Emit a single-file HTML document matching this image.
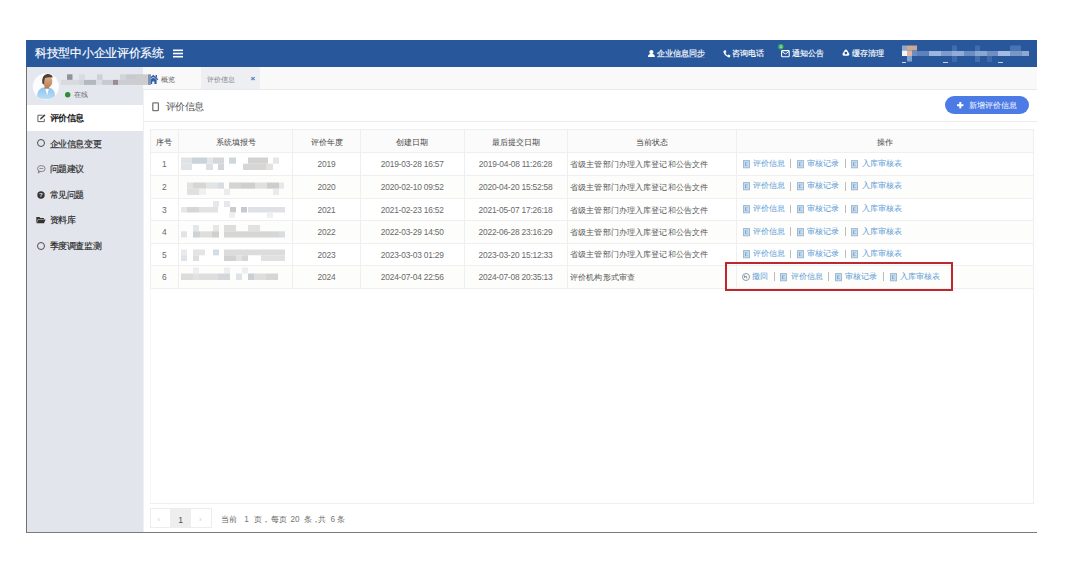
<!DOCTYPE html>
<html><head><meta charset="utf-8">
<style>
*{margin:0;padding:0;box-sizing:border-box}
html,body{width:1080px;height:561px;background:#fff;overflow:hidden;font-family:"Liberation Sans",sans-serif;}
.t{position:absolute;white-space:nowrap;line-height:1}
svg{position:absolute;overflow:visible}
.r{position:absolute}
</style></head><body>
<div class="r" style="left:26px;top:40px;width:1011px;height:27px;background:#28579c"></div>
<div class="r" style="left:26px;top:67px;width:117px;height:466px;background:#e2e5eb"></div>
<div class="r" style="left:26px;top:67px;width:1px;height:466px;background:#707070"></div>
<div class="r" style="left:26px;top:532px;width:1011px;height:1px;background:#7a7a7a"></div>
<div class="t" style="left:35px;top:47px;font-size:12px;color:#fff;letter-spacing:-0.3px;-webkit-text-stroke:0.15px #fff">科技型中小企业评价系统</div>
<svg style="left:173px;top:49px" width="11" height="9"><rect x="0" y="0.5" width="10" height="1.6" fill="#fff"/><rect x="0" y="3.7" width="10" height="1.6" fill="#fff"/><rect x="0" y="6.9" width="10" height="1.6" fill="#fff"/></svg>
<svg style="left:648px;top:49.8px" width="8" height="8"><circle cx="3.4" cy="2.1" r="2.1" fill="#fff"/><path d="M0 7.1 Q0 3.9 2.4 3.9 L4.4 3.9 Q6.8 3.9 6.8 7.1Z" fill="#fff"/></svg>
<div class="t" style="left:657px;top:49.5px;font-size:8px;color:#fff;-webkit-text-stroke:0.15px #fff">企业信息同步</div>
<div class="r" style="left:657px;top:56.5px;width:48px;height:0.8px;background:rgba(255,255,255,0.2)"></div>
<svg style="left:723px;top:49.5px" width="8" height="8"><path d="M1.2 0.5 L2.8 0.3 L3.4 2.3 L2.4 3.1 Q3.2 4.8 4.6 5.5 L5.4 4.6 L7.3 5.3 L7.1 6.9 Q6.4 7.6 5.2 7.3 Q1.6 6 0.4 2.2 Q0.3 1 1.2 0.5Z" fill="#fff"/></svg>
<div class="t" style="left:731.5px;top:49.5px;font-size:8px;color:#fff;-webkit-text-stroke:0.15px #fff">咨询电话</div>
<svg style="left:781px;top:50px" width="9" height="8"><rect x="0.6" y="0.6" width="7.6" height="6.2" rx="0.8" fill="none" stroke="#fff" stroke-width="1.1"/><path d="M0.9 1.5 L4.4 4 L7.9 1.5" fill="none" stroke="#fff" stroke-width="1"/></svg>
<svg style="left:778px;top:44.3px" width="6" height="6"><circle cx="2.8" cy="2.8" r="2.7" fill="#3ab15b"/><text x="2.8" y="4.3" font-size="4" fill="#fff" text-anchor="middle" font-family="Liberation Sans">0</text></svg>
<div class="t" style="left:791.5px;top:49.5px;font-size:8px;color:#fff;-webkit-text-stroke:0.15px #fff">通知公告</div>
<svg style="left:841.5px;top:48.8px" width="8" height="8"><path d="M3.9 1.9 L5.9 5.3 L1.9 5.3Z" fill="none" stroke="#fff" stroke-width="2.9" stroke-linejoin="round"/><circle cx="3.9" cy="4.1" r="1.35" fill="#28579c"/></svg>
<div class="t" style="left:852px;top:49.5px;font-size:8px;color:#fff;-webkit-text-stroke:0.15px #fff">缓存清理</div>
<svg style="left:901px;top:45px" width="135" height="22">
<rect x="1" y="0.5" width="5" height="5" fill="#8fa7cc"/><rect x="6" y="0.5" width="5" height="5" fill="#d0a98e"/><rect x="11" y="0.5" width="5" height="5" fill="#c9a896"/>
<rect x="1" y="5.5" width="5" height="5.5" fill="#f4f4f6"/><rect x="6" y="5.5" width="5" height="5.5" fill="#d9b9a6"/><rect x="11" y="5.5" width="5" height="5.5" fill="#6d8cc0"/>
<rect x="6" y="11" width="5" height="5.5" fill="#7ea0d2"/><rect x="1" y="17" width="4" height="1" fill="#cdd8ea"/>
<rect x="16" y="6" width="12" height="5" fill="#5b82bd"/><rect x="28" y="6" width="12" height="5" fill="#9db6dd"/><rect x="40" y="6" width="11" height="5" fill="#7d9bcc"/><rect x="51" y="6" width="12" height="5" fill="#93acd6"/><rect x="63" y="6" width="11" height="5" fill="#6b8dc4"/><rect x="74" y="6" width="12" height="5" fill="#8aa6d2"/><rect x="86" y="6" width="11" height="5" fill="#6f8fc3"/><rect x="97" y="6" width="12" height="5" fill="#a3bbe0"/><rect x="109" y="6" width="12" height="5" fill="#7896c8"/><rect x="121" y="6" width="7" height="5" fill="#8ea8d3"/>
<rect x="51" y="0.5" width="5" height="5.5" fill="#416cae"/><rect x="74" y="0.5" width="5" height="5.5" fill="#416cae"/><rect x="109" y="0.5" width="11" height="5.5" fill="#4a73b2"/>
<rect x="51" y="11" width="5" height="6" fill="#3f69ab"/><rect x="74" y="11" width="5" height="6" fill="#456eae"/><rect x="86" y="11" width="5" height="6" fill="#3f69ab"/>
<rect x="42" y="17" width="5" height="1" fill="#c5d2e8"/><rect x="97" y="17" width="5" height="1" fill="#c5d2e8"/>
</svg>
<div class="r" style="left:27px;top:67px;width:116px;height:38px;background:#e4e7ed"></div>
<svg style="left:33px;top:72.5px" width="27" height="28">
<defs><clipPath id="cc"><circle cx="12.9" cy="13.6" r="13.1"/></clipPath>
<linearGradient id="face" x1="0" y1="0" x2="0" y2="1"><stop offset="0" stop-color="#e2b48e"/><stop offset="1" stop-color="#b98256"/></linearGradient>
<linearGradient id="shirt" x1="0" y1="0" x2="0" y2="1"><stop offset="0" stop-color="#8ec4ee"/><stop offset="1" stop-color="#b9dcf8"/></linearGradient></defs>
<circle cx="12.9" cy="13.6" r="13.1" fill="#fcfcfe"/>
<g clip-path="url(#cc)">
<path d="M4 24.5 Q3.6 16.8 10 14.6 L16.4 14.6 Q22.6 16.8 22.2 24.5 Q13 27.5 4 24.5Z" fill="url(#shirt)"/>
<path d="M12 14.8 L14.2 22.5 L16 14.8Z" fill="#fbfdff"/>
<rect x="11.6" y="11.5" width="4.4" height="4.2" fill="#b57d55"/>
<ellipse cx="14.6" cy="8.4" rx="4.7" ry="6" fill="url(#face)"/>
<path d="M9.3 10.5 Q8.4 2 14.2 1.1 Q19.2 0.9 19.7 4.6 Q15.8 3.6 12 5 Q11 7.8 11.1 11.2Z" fill="#4d3f35"/>
</g></svg>
<svg style="left:61px;top:73px;z-index:5" width="90" height="13">
<rect x="6" y="1.3" width="5.5" height="5.6" fill="#929397"/><rect x="18" y="1.3" width="6" height="5.6" fill="#d8dbe0"/><rect x="36" y="1.3" width="5.5" height="5.6" fill="#cdd0d5"/><rect x="59" y="1.3" width="6" height="5.6" fill="#d2d4d8"/><rect x="65" y="1.3" width="17" height="5.6" fill="#c8cacf"/>
<rect x="0" y="6.9" width="18" height="5" fill="#d9dadd"/><rect x="18" y="6.9" width="5" height="5" fill="#d0d4db"/><rect x="23" y="6.9" width="12" height="5" fill="#b3b7be"/><rect x="35" y="6.9" width="6" height="5" fill="#d9dce1"/><rect x="41" y="6.9" width="11" height="5" fill="#c6cbd3"/><rect x="52" y="6.9" width="5" height="5" fill="#9a8d92"/><rect x="57" y="6.9" width="25" height="5" fill="#cbcdd2"/><rect x="75" y="1.3" width="12" height="10.6" fill="#cdcdcf"/><rect x="87" y="1.3" width="3" height="10.6" fill="#7f93b5"/>
</svg>
<svg style="left:64.8px;top:91.9px" width="6" height="6"><circle cx="2.7" cy="2.7" r="2.7" fill="#2f8a3a"/></svg>
<div class="t" style="left:74px;top:91px;font-size:7px;color:#666;letter-spacing:-0.5px">在线</div>
<div class="r" style="left:27px;top:105px;width:116px;height:25.6px;background:#fff"></div>
<svg style="left:36.7px;top:113.5px" width="10" height="9"><path d="M5.5 1.2 L0.9 1.2 L0.9 7.6 L7.3 7.6 L7.3 4.8" fill="none" stroke="#444" stroke-width="0.85"/><path d="M3 5.6 L3.2 4.2 L7.3 0.3 L8.5 1.4 L4.4 5.3Z" fill="#444"/></svg>
<div class="t" style="left:49.5px;top:114.0px;font-size:9px;color:#222;letter-spacing:-0.4px;font-weight:bold;">评价信息</div>
<svg style="left:36.7px;top:139.2px" width="10" height="9"><circle cx="4" cy="4" r="3.5" fill="none" stroke="#444" stroke-width="0.95"/></svg>
<div class="t" style="left:49.5px;top:139.7px;font-size:9px;color:#262626;letter-spacing:-0.4px;-webkit-text-stroke:0.15px #262626;">企业信息变更</div>
<svg style="left:36.7px;top:164.8px" width="10" height="9"><ellipse cx="4.3" cy="3.6" rx="3.8" ry="3" fill="none" stroke="#777" stroke-width="0.9"/><path d="M1.8 6 L1.2 8 L3.6 6.4" fill="none" stroke="#777" stroke-width="0.9"/><rect x="2.4" y="3.2" width="3.8" height="0.8" fill="#777"/></svg>
<div class="t" style="left:49.5px;top:165.3px;font-size:9px;color:#262626;letter-spacing:-0.4px;-webkit-text-stroke:0.15px #262626;">问题建议</div>
<svg style="left:36.7px;top:190.6px" width="10" height="9"><circle cx="4" cy="4" r="3.7" fill="#333"/><text x="4" y="6.4" font-size="6.2" font-weight="bold" fill="#e2e5eb" text-anchor="middle" font-family="Liberation Sans">?</text></svg>
<div class="t" style="left:49.5px;top:191.1px;font-size:9px;color:#262626;letter-spacing:-0.4px;-webkit-text-stroke:0.15px #262626;">常见问题</div>
<svg style="left:36.2px;top:215.6px" width="10" height="9"><path d="M0.3 1 L3.5 1 L4.3 2 L8 2 L8 3 L2 3 L0.3 7Z" fill="#333"/><path d="M2.3 3.6 L9.6 3.6 L8 7.3 L0.5 7.3Z" fill="#333"/></svg>
<div class="t" style="left:49.5px;top:216.1px;font-size:9px;color:#262626;letter-spacing:-0.4px;-webkit-text-stroke:0.15px #262626;">资料库</div>
<svg style="left:36.7px;top:241.5px" width="10" height="9"><circle cx="4" cy="4" r="3.5" fill="none" stroke="#444" stroke-width="0.95"/></svg>
<div class="t" style="left:49.5px;top:242.0px;font-size:9px;color:#262626;letter-spacing:-0.4px;-webkit-text-stroke:0.15px #262626;">季度调查监测</div>
<div class="r" style="left:50px;top:147.5px;width:51px;height:0.8px;background:rgba(60,60,60,0.22)"></div>
<div class="r" style="left:143px;top:67px;width:894px;height:23px;background:#f9f9fa;border-bottom:1px solid #e9e9e9"></div>
<div class="r" style="left:201px;top:67px;width:59px;height:22px;background:#edeff2"></div>
<svg style="left:147.5px;top:74px" width="11" height="11"><path d="M0.3 5.2 L5.3 0.8 L10.3 5.2 L9.3 6.2 L5.3 2.8 L1.3 6.2Z" fill="#2d5fa6"/><path d="M2 6 L5.3 3.4 L8.6 6 L8.6 10 L6.4 10 L6.4 7.5 L4.2 7.5 L4.2 10 L2 10Z" fill="#2d5fa6"/><rect x="7.6" y="1" width="1.4" height="2.5" fill="#2d5fa6"/></svg>
<div class="t" style="left:160.5px;top:75.5px;font-size:7px;color:#666;">概览</div>
<div class="t" style="left:207px;top:75.5px;font-size:7px;color:#888;">评价信息</div>
<div class="t" style="left:250.5px;top:74.5px;font-size:8px;color:#3a6fb4;font-weight:bold">×</div>
<div class="r" style="left:143px;top:90px;width:1px;height:442px;background:#eef0f3"></div>
<svg style="left:152px;top:102px" width="8" height="10"><rect x="0.8" y="0.8" width="5.6" height="7.8" rx="0.6" fill="none" stroke="#777" stroke-width="1.3"/></svg>
<div class="t" style="left:165.5px;top:102px;font-size:10px;color:#555;letter-spacing:-0.45px">评价信息</div>
<div class="r" style="left:945px;top:95.5px;width:84px;height:18.5px;border-radius:9.25px;background:#4c7be6"></div>
<svg style="left:957px;top:101.5px" width="7" height="7"><rect x="2.3" y="0" width="2" height="6.4" fill="#fff"/><rect x="0" y="2.2" width="6.4" height="2" fill="#fff"/></svg>
<div class="t" style="left:968.5px;top:101.8px;font-size:8px;color:#fff;">新增评价信息</div>
<div class="r" style="left:144px;top:121px;width:893px;height:1px;background:#ececec"></div>
<div class="r" style="left:149.5px;top:129.3px;width:883.5px;height:22.9px;background:#fbfbfb"></div>
<div class="r" style="left:149.5px;top:175px;width:884px;height:22.69999999999999px;background:#fdfdfb"></div>
<div class="r" style="left:149.5px;top:220.4px;width:884px;height:22.19999999999999px;background:#fdfdfb"></div>
<div class="r" style="left:149.5px;top:265.3px;width:884px;height:22.69999999999999px;background:#fdfdfb"></div>
<div class="r" style="left:149.5px;top:129.3px;width:1px;height:158.7px;background:#efefef"></div>
<div class="r" style="left:178px;top:129.3px;width:1px;height:158.7px;background:#efefef"></div>
<div class="r" style="left:292px;top:129.3px;width:1px;height:158.7px;background:#efefef"></div>
<div class="r" style="left:360px;top:129.3px;width:1px;height:158.7px;background:#efefef"></div>
<div class="r" style="left:463.5px;top:129.3px;width:1px;height:158.7px;background:#efefef"></div>
<div class="r" style="left:566.5px;top:129.3px;width:1px;height:158.7px;background:#efefef"></div>
<div class="r" style="left:736px;top:129.3px;width:1px;height:158.7px;background:#efefef"></div>
<div class="r" style="left:1033px;top:129.3px;width:1px;height:158.7px;background:#efefef"></div>
<div class="r" style="left:149.5px;top:129.3px;width:884.5px;height:1px;background:#efefef"></div>
<div class="r" style="left:149.5px;top:152.2px;width:884.5px;height:1px;background:#efefef"></div>
<div class="r" style="left:149.5px;top:175px;width:884.5px;height:1px;background:#efefef"></div>
<div class="r" style="left:149.5px;top:197.7px;width:884.5px;height:1px;background:#efefef"></div>
<div class="r" style="left:149.5px;top:220.4px;width:884.5px;height:1px;background:#efefef"></div>
<div class="r" style="left:149.5px;top:242.6px;width:884.5px;height:1px;background:#efefef"></div>
<div class="r" style="left:149.5px;top:265.3px;width:884.5px;height:1px;background:#efefef"></div>
<div class="r" style="left:149.5px;top:288px;width:884.5px;height:1px;background:#efefef"></div>
<div class="r" style="left:149.5px;top:288px;width:1px;height:215.5px;background:#f8f8f8"></div>
<div class="r" style="left:1033px;top:288px;width:1px;height:215.5px;background:#efefef"></div>
<div class="r" style="left:149.5px;top:503px;width:884.5px;height:1px;background:#efefef"></div>
<div class="t" style="left:156.25px;top:139.0px;font-size:8px;color:#444;">序号</div>
<div class="t" style="left:215.5px;top:139.0px;font-size:8px;color:#444;">系统填报号</div>
<div class="t" style="left:310.5px;top:139.0px;font-size:8px;color:#444;">评价年度</div>
<div class="t" style="left:396.25px;top:139.0px;font-size:8px;color:#444;">创建日期</div>
<div class="t" style="left:491.5px;top:139.0px;font-size:8px;color:#444;">最后提交日期</div>
<div class="t" style="left:635.75px;top:139.0px;font-size:8px;color:#444;">当前状态</div>
<div class="t" style="left:877.0px;top:139.0px;font-size:8px;color:#444;">操作</div>
<div class="t" style="left:104.25px;width:120px;text-align:center;top:160.4px;font-size:8.4px;letter-spacing:-0.2px;color:#6a6a6a">1</div>
<div class="t" style="left:266.5px;width:120px;text-align:center;top:160.4px;font-size:8.4px;letter-spacing:-0.2px;color:#6a6a6a">2019</div>
<div class="t" style="left:352.25px;width:120px;text-align:center;top:160.4px;font-size:8.4px;letter-spacing:-0.2px;color:#6a6a6a">2019-03-28 16:57</div>
<div class="t" style="left:455.5px;width:120px;text-align:center;top:160.4px;font-size:8.4px;letter-spacing:-0.2px;color:#6a6a6a">2019-04-08 11:26:28</div>
<div class="t" style="left:570px;top:161.1px;font-size:8px;color:#555;letter-spacing:0.13px">省级主管部门办理入库登记和公告文件</div>
<svg style="left:742.8px;top:159.6px" width="8" height="9"><rect x="0.5" y="0.6" width="6" height="7.2" fill="#c2def6" stroke="#9fb7cc" stroke-width="0.95"/><rect x="2" y="2.3" width="1.2" height="3.8" fill="#8fa8c2"/><rect x="3.2" y="2.3" width="1.6" height="0.9" fill="#a3bad0"/><rect x="3.2" y="5.2" width="1.6" height="0.9" fill="#a3bad0"/></svg>
<div class="t" style="left:753px;top:159.6px;font-size:8px;color:#5a9bd5;">评价信息</div>
<div class="r" style="left:789.9px;top:159.29999999999998px;width:1px;height:8.6px;background:#bcbcbc"></div>
<svg style="left:796.5px;top:159.6px" width="8" height="9"><rect x="0.5" y="0.6" width="6" height="7.2" fill="#c2def6" stroke="#9fb7cc" stroke-width="0.95"/><rect x="2" y="2.3" width="1.2" height="3.8" fill="#8fa8c2"/><rect x="3.2" y="2.3" width="1.6" height="0.9" fill="#a3bad0"/><rect x="3.2" y="5.2" width="1.6" height="0.9" fill="#a3bad0"/></svg>
<div class="t" style="left:806.6px;top:159.6px;font-size:8px;color:#5a9bd5;">审核记录</div>
<div class="r" style="left:845px;top:159.29999999999998px;width:1px;height:8.6px;background:#bcbcbc"></div>
<svg style="left:851px;top:159.6px" width="8" height="9"><rect x="0.5" y="0.6" width="6" height="7.2" fill="#c2def6" stroke="#9fb7cc" stroke-width="0.95"/><rect x="2" y="2.3" width="1.2" height="3.8" fill="#8fa8c2"/><rect x="3.2" y="2.3" width="1.6" height="0.9" fill="#a3bad0"/><rect x="3.2" y="5.2" width="1.6" height="0.9" fill="#a3bad0"/></svg>
<div class="t" style="left:861.7px;top:159.6px;font-size:8px;color:#5a9bd5;">入库审核表</div>
<div class="t" style="left:104.25px;width:120px;text-align:center;top:183.15px;font-size:8.4px;letter-spacing:-0.2px;color:#6a6a6a">2</div>
<div class="t" style="left:266.5px;width:120px;text-align:center;top:183.15px;font-size:8.4px;letter-spacing:-0.2px;color:#6a6a6a">2020</div>
<div class="t" style="left:352.25px;width:120px;text-align:center;top:183.15px;font-size:8.4px;letter-spacing:-0.2px;color:#6a6a6a">2020-02-10 09:52</div>
<div class="t" style="left:455.5px;width:120px;text-align:center;top:183.15px;font-size:8.4px;letter-spacing:-0.2px;color:#6a6a6a">2020-04-20 15:52:58</div>
<div class="t" style="left:570px;top:183.85px;font-size:8px;color:#555;letter-spacing:0.13px">省级主管部门办理入库登记和公告文件</div>
<svg style="left:742.8px;top:182.35px" width="8" height="9"><rect x="0.5" y="0.6" width="6" height="7.2" fill="#c2def6" stroke="#9fb7cc" stroke-width="0.95"/><rect x="2" y="2.3" width="1.2" height="3.8" fill="#8fa8c2"/><rect x="3.2" y="2.3" width="1.6" height="0.9" fill="#a3bad0"/><rect x="3.2" y="5.2" width="1.6" height="0.9" fill="#a3bad0"/></svg>
<div class="t" style="left:753px;top:182.35px;font-size:8px;color:#5a9bd5;">评价信息</div>
<div class="r" style="left:789.9px;top:182.04999999999998px;width:1px;height:8.6px;background:#bcbcbc"></div>
<svg style="left:796.5px;top:182.35px" width="8" height="9"><rect x="0.5" y="0.6" width="6" height="7.2" fill="#c2def6" stroke="#9fb7cc" stroke-width="0.95"/><rect x="2" y="2.3" width="1.2" height="3.8" fill="#8fa8c2"/><rect x="3.2" y="2.3" width="1.6" height="0.9" fill="#a3bad0"/><rect x="3.2" y="5.2" width="1.6" height="0.9" fill="#a3bad0"/></svg>
<div class="t" style="left:806.6px;top:182.35px;font-size:8px;color:#5a9bd5;">审核记录</div>
<div class="r" style="left:845px;top:182.04999999999998px;width:1px;height:8.6px;background:#bcbcbc"></div>
<svg style="left:851px;top:182.35px" width="8" height="9"><rect x="0.5" y="0.6" width="6" height="7.2" fill="#c2def6" stroke="#9fb7cc" stroke-width="0.95"/><rect x="2" y="2.3" width="1.2" height="3.8" fill="#8fa8c2"/><rect x="3.2" y="2.3" width="1.6" height="0.9" fill="#a3bad0"/><rect x="3.2" y="5.2" width="1.6" height="0.9" fill="#a3bad0"/></svg>
<div class="t" style="left:861.7px;top:182.35px;font-size:8px;color:#5a9bd5;">入库审核表</div>
<div class="t" style="left:104.25px;width:120px;text-align:center;top:205.8px;font-size:8.4px;letter-spacing:-0.2px;color:#6a6a6a">3</div>
<div class="t" style="left:266.5px;width:120px;text-align:center;top:205.8px;font-size:8.4px;letter-spacing:-0.2px;color:#6a6a6a">2021</div>
<div class="t" style="left:352.25px;width:120px;text-align:center;top:205.8px;font-size:8.4px;letter-spacing:-0.2px;color:#6a6a6a">2021-02-23 16:52</div>
<div class="t" style="left:455.5px;width:120px;text-align:center;top:205.8px;font-size:8.4px;letter-spacing:-0.2px;color:#6a6a6a">2021-05-07 17:26:18</div>
<div class="t" style="left:570px;top:206.5px;font-size:8px;color:#555;letter-spacing:0.13px">省级主管部门办理入库登记和公告文件</div>
<svg style="left:742.8px;top:205.0px" width="8" height="9"><rect x="0.5" y="0.6" width="6" height="7.2" fill="#c2def6" stroke="#9fb7cc" stroke-width="0.95"/><rect x="2" y="2.3" width="1.2" height="3.8" fill="#8fa8c2"/><rect x="3.2" y="2.3" width="1.6" height="0.9" fill="#a3bad0"/><rect x="3.2" y="5.2" width="1.6" height="0.9" fill="#a3bad0"/></svg>
<div class="t" style="left:753px;top:205.0px;font-size:8px;color:#5a9bd5;">评价信息</div>
<div class="r" style="left:789.9px;top:204.7px;width:1px;height:8.6px;background:#bcbcbc"></div>
<svg style="left:796.5px;top:205.0px" width="8" height="9"><rect x="0.5" y="0.6" width="6" height="7.2" fill="#c2def6" stroke="#9fb7cc" stroke-width="0.95"/><rect x="2" y="2.3" width="1.2" height="3.8" fill="#8fa8c2"/><rect x="3.2" y="2.3" width="1.6" height="0.9" fill="#a3bad0"/><rect x="3.2" y="5.2" width="1.6" height="0.9" fill="#a3bad0"/></svg>
<div class="t" style="left:806.6px;top:205.0px;font-size:8px;color:#5a9bd5;">审核记录</div>
<div class="r" style="left:845px;top:204.7px;width:1px;height:8.6px;background:#bcbcbc"></div>
<svg style="left:851px;top:205.0px" width="8" height="9"><rect x="0.5" y="0.6" width="6" height="7.2" fill="#c2def6" stroke="#9fb7cc" stroke-width="0.95"/><rect x="2" y="2.3" width="1.2" height="3.8" fill="#8fa8c2"/><rect x="3.2" y="2.3" width="1.6" height="0.9" fill="#a3bad0"/><rect x="3.2" y="5.2" width="1.6" height="0.9" fill="#a3bad0"/></svg>
<div class="t" style="left:861.7px;top:205.0px;font-size:8px;color:#5a9bd5;">入库审核表</div>
<div class="t" style="left:104.25px;width:120px;text-align:center;top:228.3px;font-size:8.4px;letter-spacing:-0.2px;color:#6a6a6a">4</div>
<div class="t" style="left:266.5px;width:120px;text-align:center;top:228.3px;font-size:8.4px;letter-spacing:-0.2px;color:#6a6a6a">2022</div>
<div class="t" style="left:352.25px;width:120px;text-align:center;top:228.3px;font-size:8.4px;letter-spacing:-0.2px;color:#6a6a6a">2022-03-29 14:50</div>
<div class="t" style="left:455.5px;width:120px;text-align:center;top:228.3px;font-size:8.4px;letter-spacing:-0.2px;color:#6a6a6a">2022-06-28 23:16:29</div>
<div class="t" style="left:570px;top:229.0px;font-size:8px;color:#555;letter-spacing:0.13px">省级主管部门办理入库登记和公告文件</div>
<svg style="left:742.8px;top:227.5px" width="8" height="9"><rect x="0.5" y="0.6" width="6" height="7.2" fill="#c2def6" stroke="#9fb7cc" stroke-width="0.95"/><rect x="2" y="2.3" width="1.2" height="3.8" fill="#8fa8c2"/><rect x="3.2" y="2.3" width="1.6" height="0.9" fill="#a3bad0"/><rect x="3.2" y="5.2" width="1.6" height="0.9" fill="#a3bad0"/></svg>
<div class="t" style="left:753px;top:227.5px;font-size:8px;color:#5a9bd5;">评价信息</div>
<div class="r" style="left:789.9px;top:227.2px;width:1px;height:8.6px;background:#bcbcbc"></div>
<svg style="left:796.5px;top:227.5px" width="8" height="9"><rect x="0.5" y="0.6" width="6" height="7.2" fill="#c2def6" stroke="#9fb7cc" stroke-width="0.95"/><rect x="2" y="2.3" width="1.2" height="3.8" fill="#8fa8c2"/><rect x="3.2" y="2.3" width="1.6" height="0.9" fill="#a3bad0"/><rect x="3.2" y="5.2" width="1.6" height="0.9" fill="#a3bad0"/></svg>
<div class="t" style="left:806.6px;top:227.5px;font-size:8px;color:#5a9bd5;">审核记录</div>
<div class="r" style="left:845px;top:227.2px;width:1px;height:8.6px;background:#bcbcbc"></div>
<svg style="left:851px;top:227.5px" width="8" height="9"><rect x="0.5" y="0.6" width="6" height="7.2" fill="#c2def6" stroke="#9fb7cc" stroke-width="0.95"/><rect x="2" y="2.3" width="1.2" height="3.8" fill="#8fa8c2"/><rect x="3.2" y="2.3" width="1.6" height="0.9" fill="#a3bad0"/><rect x="3.2" y="5.2" width="1.6" height="0.9" fill="#a3bad0"/></svg>
<div class="t" style="left:861.7px;top:227.5px;font-size:8px;color:#5a9bd5;">入库审核表</div>
<div class="t" style="left:104.25px;width:120px;text-align:center;top:250.75px;font-size:8.4px;letter-spacing:-0.2px;color:#6a6a6a">5</div>
<div class="t" style="left:266.5px;width:120px;text-align:center;top:250.75px;font-size:8.4px;letter-spacing:-0.2px;color:#6a6a6a">2023</div>
<div class="t" style="left:352.25px;width:120px;text-align:center;top:250.75px;font-size:8.4px;letter-spacing:-0.2px;color:#6a6a6a">2023-03-03 01:29</div>
<div class="t" style="left:455.5px;width:120px;text-align:center;top:250.75px;font-size:8.4px;letter-spacing:-0.2px;color:#6a6a6a">2023-03-20 15:12:33</div>
<div class="t" style="left:570px;top:251.45px;font-size:8px;color:#555;letter-spacing:0.13px">省级主管部门办理入库登记和公告文件</div>
<svg style="left:742.8px;top:249.95px" width="8" height="9"><rect x="0.5" y="0.6" width="6" height="7.2" fill="#c2def6" stroke="#9fb7cc" stroke-width="0.95"/><rect x="2" y="2.3" width="1.2" height="3.8" fill="#8fa8c2"/><rect x="3.2" y="2.3" width="1.6" height="0.9" fill="#a3bad0"/><rect x="3.2" y="5.2" width="1.6" height="0.9" fill="#a3bad0"/></svg>
<div class="t" style="left:753px;top:249.95px;font-size:8px;color:#5a9bd5;">评价信息</div>
<div class="r" style="left:789.9px;top:249.64999999999998px;width:1px;height:8.6px;background:#bcbcbc"></div>
<svg style="left:796.5px;top:249.95px" width="8" height="9"><rect x="0.5" y="0.6" width="6" height="7.2" fill="#c2def6" stroke="#9fb7cc" stroke-width="0.95"/><rect x="2" y="2.3" width="1.2" height="3.8" fill="#8fa8c2"/><rect x="3.2" y="2.3" width="1.6" height="0.9" fill="#a3bad0"/><rect x="3.2" y="5.2" width="1.6" height="0.9" fill="#a3bad0"/></svg>
<div class="t" style="left:806.6px;top:249.95px;font-size:8px;color:#5a9bd5;">审核记录</div>
<div class="r" style="left:845px;top:249.64999999999998px;width:1px;height:8.6px;background:#bcbcbc"></div>
<svg style="left:851px;top:249.95px" width="8" height="9"><rect x="0.5" y="0.6" width="6" height="7.2" fill="#c2def6" stroke="#9fb7cc" stroke-width="0.95"/><rect x="2" y="2.3" width="1.2" height="3.8" fill="#8fa8c2"/><rect x="3.2" y="2.3" width="1.6" height="0.9" fill="#a3bad0"/><rect x="3.2" y="5.2" width="1.6" height="0.9" fill="#a3bad0"/></svg>
<div class="t" style="left:861.7px;top:249.95px;font-size:8px;color:#5a9bd5;">入库审核表</div>
<div class="t" style="left:104.25px;width:120px;text-align:center;top:273.45px;font-size:8.4px;letter-spacing:-0.2px;color:#6a6a6a">6</div>
<div class="t" style="left:266.5px;width:120px;text-align:center;top:273.45px;font-size:8.4px;letter-spacing:-0.2px;color:#6a6a6a">2024</div>
<div class="t" style="left:352.25px;width:120px;text-align:center;top:273.45px;font-size:8.4px;letter-spacing:-0.2px;color:#6a6a6a">2024-07-04 22:56</div>
<div class="t" style="left:455.5px;width:120px;text-align:center;top:273.45px;font-size:8.4px;letter-spacing:-0.2px;color:#6a6a6a">2024-07-08 20:35:13</div>
<div class="t" style="left:570px;top:274.15px;font-size:8px;color:#555;letter-spacing:0.13px">评价机构形式审查</div>
<svg style="left:742px;top:272.65px" width="9" height="9"><circle cx="4" cy="4" r="3.5" fill="none" stroke="#7d8ea3" stroke-width="0.9"/><path d="M2.6 2.3 L2.6 5 M2.6 3.6 L4.6 3.6 L4.6 5.4" fill="none" stroke="#5f7f9f" stroke-width="0.8"/></svg>
<div class="t" style="left:752px;top:272.65px;font-size:8px;color:#5a9bd5;">撤回</div>
<div class="r" style="left:773.5px;top:272.34999999999997px;width:1px;height:8.6px;background:#bcbcbc"></div>
<svg style="left:780.3px;top:272.65px" width="8" height="9"><rect x="0.5" y="0.6" width="6" height="7.2" fill="#c2def6" stroke="#9fb7cc" stroke-width="0.95"/><rect x="2" y="2.3" width="1.2" height="3.8" fill="#8fa8c2"/><rect x="3.2" y="2.3" width="1.6" height="0.9" fill="#a3bad0"/><rect x="3.2" y="5.2" width="1.6" height="0.9" fill="#a3bad0"/></svg>
<div class="t" style="left:791px;top:272.65px;font-size:8px;color:#5a9bd5;">评价信息</div>
<div class="r" style="left:828.3px;top:272.34999999999997px;width:1px;height:8.6px;background:#bcbcbc"></div>
<svg style="left:835.2px;top:272.65px" width="8" height="9"><rect x="0.5" y="0.6" width="6" height="7.2" fill="#c2def6" stroke="#9fb7cc" stroke-width="0.95"/><rect x="2" y="2.3" width="1.2" height="3.8" fill="#8fa8c2"/><rect x="3.2" y="2.3" width="1.6" height="0.9" fill="#a3bad0"/><rect x="3.2" y="5.2" width="1.6" height="0.9" fill="#a3bad0"/></svg>
<div class="t" style="left:845.3px;top:272.65px;font-size:8px;color:#5a9bd5;">审核记录</div>
<div class="r" style="left:882.5px;top:272.34999999999997px;width:1px;height:8.6px;background:#bcbcbc"></div>
<svg style="left:889.5px;top:272.65px" width="8" height="9"><rect x="0.5" y="0.6" width="6" height="7.2" fill="#c2def6" stroke="#9fb7cc" stroke-width="0.95"/><rect x="2" y="2.3" width="1.2" height="3.8" fill="#8fa8c2"/><rect x="3.2" y="2.3" width="1.6" height="0.9" fill="#a3bad0"/><rect x="3.2" y="5.2" width="1.6" height="0.9" fill="#a3bad0"/></svg>
<div class="t" style="left:899.5px;top:272.65px;font-size:8px;color:#5a9bd5;">入库审核表</div>
<div class="r" style="left:725px;top:261.6px;width:227.5px;height:29px;border:2.2px solid #bd272d"></div>
<svg style="left:0;top:0" width="1080" height="561"><defs><filter id="bl" x="-5%" y="-5%" width="110%" height="110%"><feGaussianBlur stdDeviation="1"/></filter></defs><g><rect x="181" y="157.5" width="11" height="6.2" fill="#dfe3e6"/><rect x="192" y="157.5" width="15" height="6.2" fill="#c9d3da"/><rect x="207" y="157.5" width="6" height="6.2" fill="#e3e6e8"/><rect x="213" y="157.5" width="11" height="6.2" fill="#d4d6d8"/><rect x="229" y="157.5" width="7" height="6.2" fill="#cdd7dc"/><rect x="248" y="157.5" width="20" height="6.2" fill="#d2d2d2"/><rect x="273" y="157.5" width="6" height="6.2" fill="#e3e6ea"/><rect x="181" y="163.7" width="11" height="6.3" fill="#e0e4e7"/><rect x="206" y="163.7" width="7" height="6.3" fill="#dde0e2"/><rect x="218" y="163.7" width="6" height="6.3" fill="#d0d6dc"/><rect x="243" y="163.7" width="23" height="6.3" fill="#d8d6d4"/><rect x="266" y="163.7" width="7" height="6.3" fill="#e4e2e0"/><rect x="187" y="182.5" width="6" height="6.2" fill="#e2e2e2"/><rect x="193" y="182.5" width="13" height="6.2" fill="#d6d6d6"/><rect x="206" y="182.5" width="12" height="6.2" fill="#e2e4e6"/><rect x="218" y="182.5" width="6" height="6.2" fill="#d7dbe2"/><rect x="229" y="182.5" width="12" height="6.2" fill="#d4d4d4"/><rect x="241" y="182.5" width="14" height="6.2" fill="#cfcfcf"/><rect x="255" y="182.5" width="12" height="6.2" fill="#e0e0e0"/><rect x="267" y="182.5" width="12" height="6.2" fill="#cdcdcd"/><rect x="279" y="182.5" width="5" height="6.2" fill="#e6e8ea"/><rect x="187" y="188.7" width="12" height="6.2" fill="#e0e0e0"/><rect x="199" y="188.7" width="7" height="6.2" fill="#f0f0f0"/><rect x="224" y="188.7" width="6" height="6.2" fill="#ececec"/><rect x="273" y="188.7" width="6" height="6.2" fill="#e8eaec"/><rect x="213" y="201" width="6" height="6" fill="#e6e9ec"/><rect x="224" y="201" width="6" height="6" fill="#e6e9ec"/><rect x="181" y="207" width="6" height="5.5" fill="#e6e6e6"/><rect x="187" y="207" width="12" height="5.5" fill="#d6d6d6"/><rect x="199" y="207" width="19" height="5.5" fill="#e3e3e3"/><rect x="230" y="207" width="6" height="5.5" fill="#cbcbcb"/><rect x="241" y="207" width="6" height="5.5" fill="#c6cad0"/><rect x="248" y="207" width="37" height="5.5" fill="#dfe1e6"/><rect x="229" y="212.5" width="6" height="5.5" fill="#eef0f2"/><rect x="267" y="212.5" width="6" height="5.5" fill="#eef0f2"/><rect x="193" y="225" width="6" height="6.3" fill="#e4e6e8"/><rect x="213" y="225" width="6" height="6.3" fill="#e4e6e8"/><rect x="224" y="225" width="12" height="6.3" fill="#dddddd"/><rect x="248" y="225" width="12" height="6.3" fill="#e2e2e2"/><rect x="181" y="231.3" width="6" height="6.2" fill="#e0e4e8"/><rect x="193" y="231.3" width="7" height="6.2" fill="#cfd3d6"/><rect x="200" y="231.3" width="12" height="6.2" fill="#dedede"/><rect x="212" y="231.3" width="7" height="6.2" fill="#cfcfcf"/><rect x="224" y="231.3" width="55" height="6.2" fill="#d6d6d6"/><rect x="279" y="231.3" width="6" height="6.2" fill="#d6dde3"/><rect x="181" y="249.5" width="6" height="5.8" fill="#e8eaec"/><rect x="193" y="249.5" width="12" height="5.8" fill="#e4e4e4"/><rect x="213" y="249.5" width="6" height="5.8" fill="#d3dde5"/><rect x="224" y="249.5" width="61" height="5.8" fill="#dcdcdc"/><rect x="181" y="255.3" width="6" height="5.7" fill="#dde3e8"/><rect x="193" y="255.3" width="6" height="5.7" fill="#dedede"/><rect x="224" y="255.3" width="12" height="5.7" fill="#d2d2d2"/><rect x="236" y="255.3" width="6" height="5.7" fill="#e2e2e2"/><rect x="242" y="255.3" width="6" height="5.7" fill="#d6d6d6"/><rect x="261" y="255.3" width="24" height="5.7" fill="#e0e0e0"/><rect x="193" y="267.5" width="6" height="6" fill="#eceeef"/><rect x="224" y="267.5" width="6" height="6" fill="#eceeef"/><rect x="242" y="267.5" width="6" height="6" fill="#eceeef"/><rect x="181" y="273.5" width="12" height="6.5" fill="#dcdcdc"/><rect x="193" y="273.5" width="6" height="6.5" fill="#e0e2e4"/><rect x="199" y="273.5" width="19" height="6.5" fill="#dedede"/><rect x="218" y="273.5" width="12" height="6.5" fill="#d3d6da"/><rect x="236" y="273.5" width="6" height="6.5" fill="#dfe3e6"/><rect x="248" y="273.5" width="6" height="6.5" fill="#c9cfd6"/><rect x="254" y="273.5" width="12" height="6.5" fill="#dedede"/><rect x="266" y="273.5" width="12" height="6.5" fill="#d6d6d6"/></g></svg>
<div class="r" style="left:149.5px;top:508px;width:62px;height:19.5px;border:1px solid #ededed;background:#fff"></div>
<div class="r" style="left:170.3px;top:508px;width:20.6px;height:19.5px;background:#eeeeee;border-top:1px solid #ededed;border-bottom:1px solid #ededed"></div>
<div class="t" style="left:157.5px;top:515.5px;font-size:8px;color:#ccc;">‹</div>
<div class="t" style="left:178.2px;top:515.5px;font-size:8.6px;color:#555;">1</div>
<div class="t" style="left:199px;top:515.5px;font-size:8px;color:#ccc;">›</div>
<div class="t" style="left:221.2px;top:516.4px;font-size:8px;color:#666;">当前</div>
<div class="t" style="left:254.4px;top:516.4px;font-size:8px;color:#666;">页，</div>
<div class="t" style="left:270.5px;top:516.4px;font-size:8px;color:#666;">每页</div>
<div class="t" style="left:304.4px;top:516.4px;font-size:8px;color:#666;">条，</div>
<div class="t" style="left:318.3px;top:516.4px;font-size:8px;color:#666;">共</div>
<div class="t" style="left:337.3px;top:516.4px;font-size:8px;color:#666;">条</div>
<div class="t" style="left:244.2px;top:516.1px;font-size:8.2px;color:#777;">1</div>
<div class="t" style="left:290.4px;top:516.1px;font-size:8.2px;color:#777;">20</div>
<div class="t" style="left:330.4px;top:516.1px;font-size:8.2px;color:#777;">6</div>
</body></html>
